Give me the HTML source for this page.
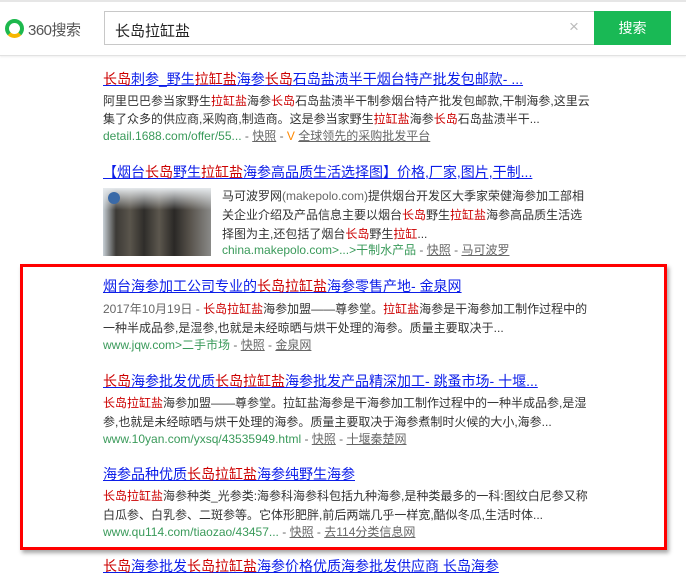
<!DOCTYPE html>
<html><head><meta charset="utf-8"><style>
*{margin:0;padding:0;box-sizing:border-box}
body{width:686px;height:563px;overflow:hidden;background:#fff;font-family:"Liberation Sans","Noto Sans CJK SC",sans-serif;font-size:12px;color:#333;position:relative}
.hdr{position:absolute;left:0;top:0;width:686px;height:56px;border-top:2px solid #e6e6e6;border-bottom:1px solid #e2e2e2;box-shadow:0 1px 2px #eee}
.sb{position:absolute;left:104px;top:11px;width:491px;height:34px;border:1px solid #c8c8c8;border-right:none;font-size:15px;color:#222;padding:8px 0 0 10px}
.x{position:absolute;left:569px;top:17px;color:#bbb;font-size:17px}
.btn{position:absolute;left:594px;top:11px;width:77px;height:34px;background:#19b955;color:#fff;font-size:14px;text-align:center;line-height:34px}
.logo{position:absolute;left:5px;top:19px;width:19px;height:19px;border-radius:50%;border:4px solid #1db84d;border-bottom-color:#f6b600;border-left-color:#1db84d}
.logot{position:absolute;left:28px;top:19px;font-size:15px;color:#555;letter-spacing:-0.5px}
.l{position:absolute;left:103px;white-space:nowrap;line-height:19px}
.t{color:#0c1ee8;text-decoration:underline;font-size:14px}
.r{color:#c00}
.u{color:#3a9a5a}
.g{color:#666}
.k{color:#666;text-decoration:underline}
.box{position:absolute;left:20px;top:264px;width:647px;height:286px;border:3px solid #f00;box-shadow:2px 3px 4px rgba(0,0,0,.35)}
</style></head><body>
<div class="hdr"></div>
<div class="logo"></div><div class="logot">360搜索</div>
<div class="sb">长岛拉缸盐</div><div class="x">×</div>
<div class="btn">搜索</div>

<div class="l t" style="top:70px"><span class="r">长岛</span>刺参_野生<span class="r">拉缸盐</span>海参<span class="r">长岛</span>石岛盐渍半干烟台特产批发包邮款- ...</div>
<div class="l" style="top:92px">阿里巴巴参当家野生<span class="r">拉缸盐</span>海参<span class="r">长岛</span>石岛盐渍半干制参烟台特产批发包邮款,干制海参,这里云</div>
<div class="l" style="top:110px">集了众多的供应商,采购商,制造商。这是参当家野生<span class="r">拉缸盐</span>海参<span class="r">长岛</span>石岛盐渍半干...</div>
<div class="l g" style="top:127px"><span class="u">detail.1688.com/offer/55...</span> - <span class="k">快照</span> - <span style="color:#f80">V</span> <span class="k">全球领先的采购批发平台</span></div>

<div class="l t" style="top:163px">【烟台<span class="r">长岛</span>野生<span class="r">拉缸盐</span>海参高品质生活选择图】价格,厂家,图片,干制...</div>
<div style="position:absolute;left:103px;top:188px;width:108px;height:68px;background:linear-gradient(90deg,#c8d0d6,#3c3a36 12%,#5a554c 25%,#2f2d2a 38%,#5c574e 52%,#2a2826 66%,#56514a 80%,#8a8a88);"></div>
<div style="position:absolute;left:103px;top:188px;width:108px;height:22px;background:linear-gradient(#e6eaed,rgba(230,234,237,0))"></div>
<div style="position:absolute;left:108px;top:192px;width:12px;height:12px;border-radius:50%;background:#3a6aa8"></div>
<div class="l" style="left:222px;top:187px">马可波罗网<span class="g">(makepolo.com)</span>提供烟台开发区大季家荣健海参加工部相</div>
<div class="l" style="left:222px;top:206px">关企业介绍及产品信息主要以烟台<span class="r">长岛</span>野生<span class="r">拉缸盐</span>海参高品质生活选</div>
<div class="l" style="left:222px;top:225px">择图为主,还包括了烟台<span class="r">长岛</span>野生<span class="r">拉缸</span>...</div>
<div class="l g" style="left:222px;top:241px"><span class="u">china.makepolo.com&gt;...&gt;干制水产品</span> - <span class="k">快照</span> - <span class="k">马可波罗</span></div>

<div class="box"></div>
<div class="l t" style="top:277px">烟台海参加工公司专业的<span class="r">长岛拉缸盐</span>海参零售产地- 金泉网</div>
<div class="l" style="top:300px"><span class="g">2017年10月19日 - </span><span class="r">长岛拉缸盐</span>海参加盟——尊参堂。<span class="r">拉缸盐</span>海参是干海参加工制作过程中的</div>
<div class="l" style="top:319px">一种半成品参,是湿参,也就是未经晾晒与烘干处理的海参。质量主要取决于...</div>
<div class="l g" style="top:336px"><span class="u">www.jqw.com&gt;二手市场</span> - <span class="k">快照</span> - <span class="k">金泉网</span></div>

<div class="l t" style="top:372px"><span class="r">长岛</span>海参批发优质<span class="r">长岛拉缸盐</span>海参批发产品精深加工- 跳蚤市场- 十堰...</div>
<div class="l" style="top:394px"><span class="r">长岛拉缸盐</span>海参加盟——尊参堂。拉缸盐海参是干海参加工制作过程中的一种半成品参,是湿</div>
<div class="l" style="top:413px">参,也就是未经晾晒与烘干处理的海参。质量主要取决于海参煮制时火候的大小,海参...</div>
<div class="l g" style="top:430px"><span class="u">www.10yan.com/yxsq/43535949.html</span> - <span class="k">快照</span> - <span class="k">十堰秦楚网</span></div>

<div class="l t" style="top:465px">海参品种优质<span class="r">长岛拉缸盐</span>海参纯野生海参</div>
<div class="l" style="top:487px"><span class="r">长岛拉缸盐</span>海参种类_光参类:海参科海参科包括九种海参,是种类最多的一科:图纹白尼参又称</div>
<div class="l" style="top:506px">白瓜参、白乳参、二斑参等。它体形肥胖,前后两端几乎一样宽,酷似冬瓜,生活时体...</div>
<div class="l g" style="top:523px"><span class="u">www.qu114.com/tiaozao/43457...</span> - <span class="k">快照</span> - <span class="k">去114分类信息网</span></div>

<div class="l t" style="top:557px"><span class="r">长岛</span>海参批发<span class="r">长岛拉缸盐</span>海参价格优质海参批发供应商 长岛海参</div>
</body></html>
